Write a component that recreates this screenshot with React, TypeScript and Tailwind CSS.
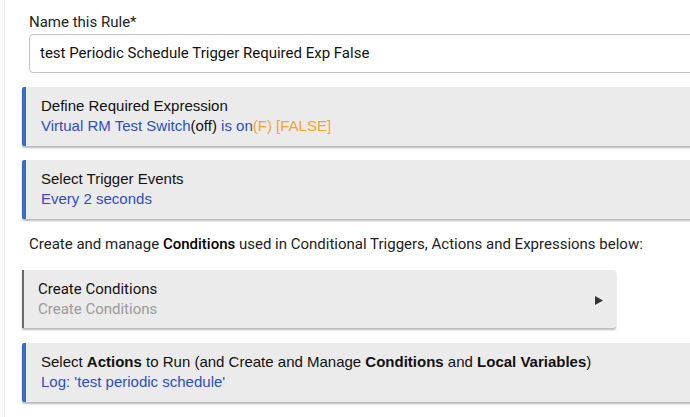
export default function App() {
  return (
    <div className="w-[690px] h-[417px] overflow-hidden bg-white relative">
      <div className="absolute left-0 top-0 h-full w-[5px] bg-[#fafafa] border-r border-[#ededed]" />
      <div className="w-[780px] pl-[22px] pt-[13px] font-['Liberation_Sans',Arial,sans-serif]">
        <div className="pl-[7px] font-['Roboto',sans-serif] text-[15px] leading-[18px] text-[#222]">
          Name this Rule*
        </div>
        <div className="ml-[7px] mt-[3px] h-[39px] rounded-[4px] border border-[#c2c2c2] flex items-center pl-[10px] font-['Roboto',sans-serif] text-[15px] text-[#111]">
          test Periodic Schedule Trigger Required Exp False
        </div>

        <Card title={<>Define Required Expression</>} className="mt-[14px]">
          <span className="text-[#2c4fbf]">Virtual RM Test Switch</span>
          <span className="text-[#111]">(off)</span>
          <span className="text-[#2c4fbf]"> is on</span>
          <span className="text-[#f0a534]">(F) [FALSE]</span>
        </Card>

        <Card title={<>Select Trigger Events</>} className="mt-[14px]">
          <span className="text-[#2c4fbf]">Every 2 seconds</span>
        </Card>

        <p className="pl-[7px] mt-[16px] font-['Roboto',sans-serif] text-[15px] leading-[18px] text-[#222]">
          Create and manage <b className="font-medium text-black">Conditions</b> used in Conditional Triggers, Actions and Expressions below:
        </p>

        <div className="mt-[17px] w-[594px] h-[58px] bg-[#ebebeb] border-l-2 border-[#6a6a6a] rounded-r-[3px] shadow-[0_2px_2px_rgba(0,0,0,0.28)] flex items-center pl-[14px] pr-[13px] font-['Roboto',sans-serif] text-[15px]">
          <div className="flex-1 leading-[20px]">
            <div className="text-[#111]">Create Conditions</div>
            <div className="text-[#9a9a9a]">Create Conditions</div>
          </div>
          <svg width="8" height="9" viewBox="0 0 8 9" className="mt-[2px]">
            <path d="M0 0 L8 4.5 L0 9 Z" fill="#333" />
          </svg>
        </div>

        <Card
          className="mt-[15px]"
          title={
            <>
              Select <b>Actions</b> to Run (and Create and Manage <b>Conditions</b> and <b>Local Variables</b>)
            </>
          }
        >
          <span className="text-[#2c4fbf]">Log: 'test periodic schedule'</span>
        </Card>
      </div>
    </div>
  );
}

function Card({
  title,
  children,
  className,
}: {
  title: React.ReactNode;
  children: React.ReactNode;
  className?: string;
}) {
  return (
    <div
      className={`h-[59px] bg-[#ebebeb] border-l-4 border-[#3a6cc6] rounded-l-[2px] shadow-[0_2px_2px_rgba(0,0,0,0.28)] pl-[15px] pt-[9px] text-[15px] leading-[20px] ${className ?? ""}`}
    >
      <div className="text-[#111]">{title}</div>
      <div>{children}</div>
    </div>
  );
}
